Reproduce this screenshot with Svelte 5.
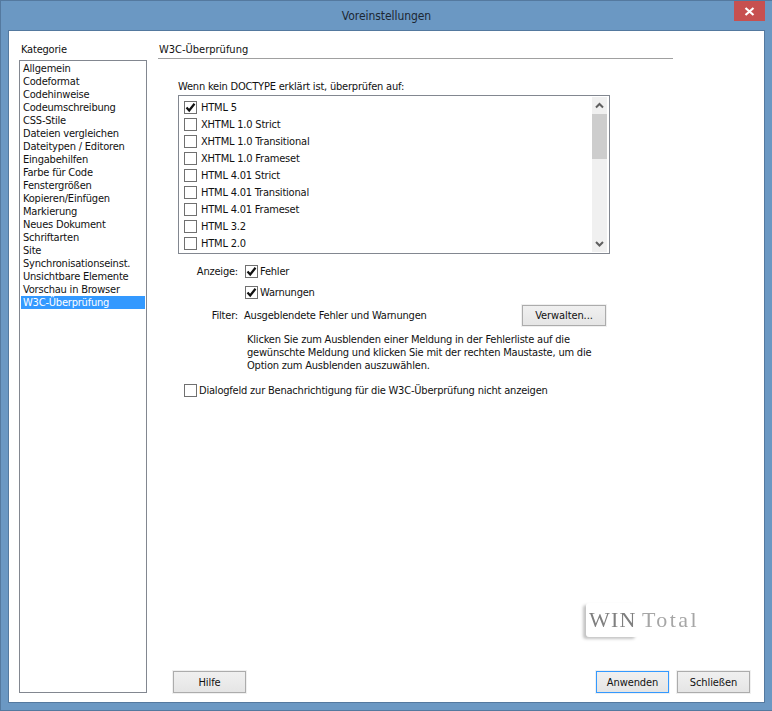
<script>
  const categories = [
    'Allgemein', 'Codeformat', 'Codehinweise', 'Codeumschreibung', 'CSS-Stile',
    'Dateien vergleichen', 'Dateitypen / Editoren', 'Eingabehilfen', 'Farbe für Code',
    'Fenstergrößen', 'Kopieren/Einfügen', 'Markierung', 'Neues Dokument', 'Schriftarten',
    'Site', 'Synchronisationseinst.', 'Unsichtbare Elemente', 'Vorschau in Browser',
    'W3C-Überprüfung'
  ];
  const doctypes = [
    'HTML 5', 'XHTML 1.0 Strict', 'XHTML 1.0 Transitional', 'XHTML 1.0 Frameset',
    'HTML 4.01 Strict', 'HTML 4.01 Transitional', 'HTML 4.01 Frameset', 'HTML 3.2', 'HTML 2.0'
  ];
</script>

{#snippet box(checked)}
  <span class="box">
    {#if checked}
      <svg width="11" height="11" viewBox="0 0 11 11"><path d="M1.5 5.5 L4.2 8.5 L9.5 1.8" fill="none" stroke="#111" stroke-width="2.2" /></svg>
    {/if}
  </span>
{/snippet}

<div class="window">
  <header class="titlebar">
    <span class="title">Voreinstellungen</span>
    <button class="close" aria-label="Schließen">
      <svg width="11" height="9" viewBox="0 0 11 9"><path d="M1.5 1 L9.5 8 M9.5 1 L1.5 8" stroke="#fff" stroke-width="2.2" fill="none" /></svg>
    </button>
  </header>

  <div class="client">
    <aside class="sidebar">
      <div class="side-label">Kategorie</div>
      <ul class="categories">
        {#each categories as c, i}
          <li class:selected={i === categories.length - 1}>{c}</li>
        {/each}
      </ul>
    </aside>

    <main class="panel">
      <h2>W3C-Überprüfung</h2>
      <div class="content">
        <div class="list-label">Wenn kein DOCTYPE erklärt ist, überprüfen auf:</div>
        <div class="listbox">
          <div class="rows">
            {#each doctypes as d, i}
              <div class="row">{@render box(i === 0)}<span>{d}</span></div>
            {/each}
          </div>
          <div class="scrollbar">
            <svg class="arrow" width="15" height="17" viewBox="0 0 15 17"><path d="M4 10.5 L7.5 7 L11 10.5" fill="none" stroke="#606060" stroke-width="2" /></svg>
            <div class="thumb"></div>
            <div class="track"></div>
            <svg class="arrow" width="15" height="17" viewBox="0 0 15 17"><path d="M4 7 L7.5 10.5 L11 7" fill="none" stroke="#606060" stroke-width="2" /></svg>
          </div>
        </div>

        <div class="options">
          <div class="opt-label anzeige">Anzeige:</div>
          <div class="check">{@render box(true)}<span>Fehler</span></div>
          <div class="check second">{@render box(true)}<span>Warnungen</span></div>
          <div class="opt-label filter">Filter:</div>
          <div class="filter-row">
            <span>Ausgeblendete Fehler und Warnungen</span>
            <button class="btn manage">Verwalten...</button>
          </div>
          <p class="hint">Klicken Sie zum Ausblenden einer Meldung in der Fehlerliste auf die<br />gewünschte Meldung und klicken Sie mit der rechten Maustaste, um die<br />Option zum Ausblenden auszuwählen.</p>
        </div>

        <div class="notify">{@render box(false)}<span>Dialogfeld zur Benachrichtigung für die W3C-Überprüfung nicht anzeigen</span></div>
      </div>

      <div class="watermark" aria-hidden="true">
        <div class="plate"></div>
        <span class="win">WIN</span><span class="total">Total</span>
      </div>

      <footer class="actions">
        <button class="btn help">Hilfe</button>
        <div class="right">
          <button class="btn default">Anwenden</button>
          <button class="btn">Schließen</button>
        </div>
      </footer>
    </main>
  </div>
</div>

<style>
  :global(body) {
    margin: 0;
    background: #fff;
  }

  .window {
    width: 772px;
    height: 711px;
    box-sizing: border-box;
    display: flex;
    flex-direction: column;
    padding: 0 7px 7px 7px;
    background: #6b98c3;
    border: 1px solid #54799f;
    border-width: 1px 0 1px 1px;
    font-family: "DejaVu Sans Condensed", "DejaVu Sans", sans-serif;
    font-stretch: condensed;
    font-size: 11px;
    letter-spacing: -0.2px;
    color: #111;
  }

  .titlebar {
    height: 29px;
    flex: none;
    display: flex;
    align-items: flex-start;
    justify-content: center;
    position: relative;
  }

  .title {
    margin-top: 8px;
    font-size: 12px;
    letter-spacing: -0.06px;
    color: #1c2733;
  }

  .close {
    position: absolute;
    right: 0;
    top: 0;
    width: 31px;
    height: 20px;
    padding: 0;
    border: 0;
    background: #c75050;
    display: flex;
    align-items: center;
    justify-content: center;
  }

  .client {
    flex: 1;
    display: flex;
    background: #fff;
    border: 1px solid #54799f;
    padding: 12px 0 9px 10px;
    min-height: 0;
  }

  .sidebar {
    width: 128px;
    flex: none;
    display: flex;
    flex-direction: column;
  }

  .side-label {
    height: 17px;
    padding-left: 2px;
    line-height: 13px;
  }

  .categories {
    flex: 1;
    list-style: none;
    margin: 0;
    padding: 1px 1px;
    border: 1px solid #828790;
    box-sizing: border-box;
  }

  .categories li {
    height: 13px;
    line-height: 13px;
    padding-left: 2px;
    white-space: nowrap;
  }

  .categories li.selected {
    background: #3399ff;
    color: #fff;
  }

  .panel {
    flex: 1;
    margin-left: 11px;
    display: flex;
    flex-direction: column;
    position: relative;
  }

  h2 {
    font-weight: normal;
    font-size: 11px;
    letter-spacing: 0;
    margin: 0;
    width: 515px;
    height: 16px;
    line-height: 13px;
    padding-left: 1px;
    box-sizing: border-box;
    border-bottom: 1px solid #a0a0a0;
  }

  .content {
    flex: 1;
    padding: 21px 0 0 20px;
  }

  .list-label {
    height: 15px;
    line-height: 13px;
  }

  .listbox {
    width: 432px;
    height: 159px;
    box-sizing: border-box;
    border: 1px solid #828790;
    display: flex;
    justify-content: space-between;
    padding: 1px 2px 1px 0;
  }

  .rows {
    padding: 2px 0 0 5px;
  }

  .row {
    height: 17px;
    display: flex;
    align-items: center;
    gap: 4px;
  }

  .box {
    width: 11px;
    height: 11px;
    flex: none;
    border: 1px solid #707070;
    background: #fff;
    display: block;
  }

  .box svg {
    display: block;
  }

  .scrollbar {
    width: 15px;
    display: flex;
    flex-direction: column;
    background: #f0f0f0;
  }

  .arrow {
    flex: none;
    display: block;
  }

  .thumb {
    height: 45px;
    flex: none;
    background: #cdcdcd;
  }

  .track {
    flex: 1;
  }

  .options {
    display: grid;
    grid-template-columns: 60px 1fr;
    column-gap: 7px;
    margin-top: 9px;
  }

  .opt-label {
    text-align: right;
    line-height: 13px;
  }

  .anzeige {
    padding-top: 2px;
  }

  .check {
    display: flex;
    align-items: center;
    gap: 2px;
    height: 17px;
    grid-column: 2;
  }

  .check.second {
    margin-top: 4px;
  }

  .filter {
    grid-row: 3;
    padding-top: 8px;
  }

  .filter-row {
    grid-column: 2;
    grid-row: 3;
    width: 362px;
    margin-left: -1px;
    margin-top: 4px;
    display: flex;
    justify-content: space-between;
    align-items: flex-start;
    line-height: 13px;
  }

  .filter-row span {
    padding-top: 4px;
  }

  .hint {
    grid-column: 2;
    margin: 7px 0 0 2px;
    line-height: 13px;
  }

  .notify {
    display: flex;
    align-items: center;
    gap: 2px;
    margin: 10px 0 0 6px;
    height: 17px;
  }

  .btn {
    width: 73px;
    height: 22px;
    padding: 0;
    box-sizing: border-box;
    border: 1px solid #acacac;
    outline: 1px solid #f0f0f0;
    background: linear-gradient(#f0f0f0, #e5e5e5);
    font: inherit;
    font-stretch: condensed;
    letter-spacing: -0.1px;
    color: #111;
  }

  .manage {
    width: 84px;
    height: 21px;
  }

  .default {
    border-color: #3399ff;
  }

  .actions {
    display: flex;
    justify-content: space-between;
    padding: 0 14px 0 15px;
  }

  .right {
    display: flex;
    gap: 8px;
  }

  .watermark {
    position: absolute;
    left: 424px;
    top: 560px;
    width: 120px;
    height: 50px;
    filter: blur(0.4px);
  }

  .plate {
    position: absolute;
    left: 4px;
    top: 0;
    width: 52px;
    height: 34px;
    border-radius: 3px;
    background: #fff;
    box-shadow: -3px 2px 3px #c4c4c4;
  }

  .win, .total {
    position: absolute;
    top: 4px;
    font-family: "Liberation Serif", serif;
    font-size: 22px;
  }

  .win {
    left: 7px;
    letter-spacing: 1.2px;
    color: #7f7f7f;
  }

  .total {
    left: 60px;
    letter-spacing: 2.4px;
    color: #a6a6a6;
  }
</style>
